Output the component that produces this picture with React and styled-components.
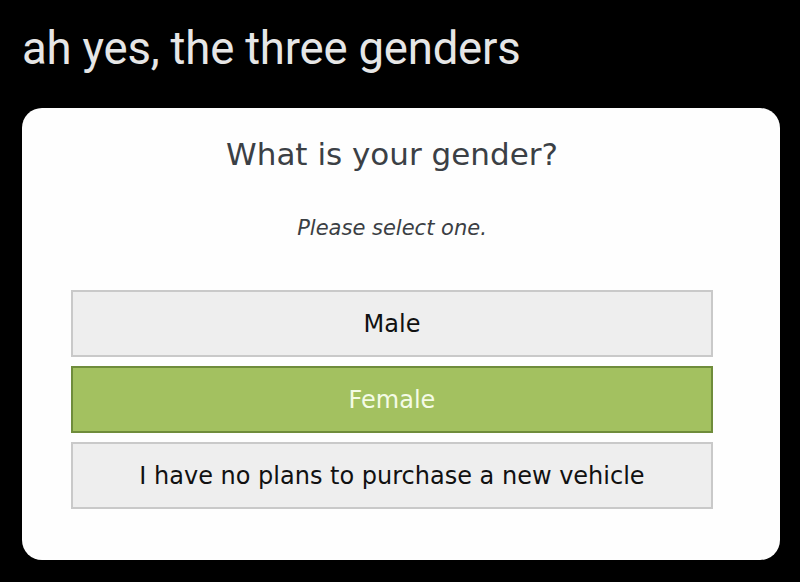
import React from "react";
import styled, { createGlobalStyle } from "styled-components";

const Global = createGlobalStyle`
  html, body { margin: 0; padding: 0; background: #000; }
  body { width: 800px; height: 582px; overflow: hidden; }
`;

const Page = styled.div`
  width: 800px;
  height: 582px;
  background: #000;
  display: flex;
  flex-direction: column;
  padding: 0 20px 22px 22px;
  box-sizing: border-box;
`;

const Caption = styled.h1`
  margin: 0;
  padding-top: 21px;
  height: 108px;
  flex: none;
  box-sizing: border-box;
  font-family: Roboto, "Noto Sans", sans-serif;
  font-weight: 400;
  font-size: 45.5px;
  line-height: 56px;
  color: #e6e6e6;
  letter-spacing: -0.2px;
`;

const Card = styled.div`
  flex: 1;
  background: #fefefe;
  border-radius: 20px;
  display: flex;
  flex-direction: column;
  align-items: center;
  padding: 24px 67px 0 49px;
  font-family: "DejaVu Sans", Verdana, sans-serif;
`;

const Question = styled.h2`
  margin: 0;
  font-weight: 400;
  font-size: 31px;
  line-height: 44px;
  color: #3b4045;
`;

const Hint = styled.p`
  margin: 38px 0 0;
  font-style: italic;
  font-size: 21px;
  line-height: 28px;
  color: #3b3f44;
`;

const Options = styled.div`
  align-self: stretch;
  display: flex;
  flex-direction: column;
  gap: 9px;
  margin-top: 48px;
`;

const Option = styled.div`
  height: 67px;
  box-sizing: border-box;
  display: flex;
  align-items: center;
  justify-content: center;
  font-size: 24px;
  border: 2px solid ${(p) => (p.$selected ? "#6f8c3b" : "#c9c9c9")};
  background: ${(p) => (p.$selected ? "#a3c160" : "#eeeeee")};
  color: ${(p) => (p.$selected ? "#f4fbe6" : "#111")};
`;

const options = [
  { label: "Male" },
  { label: "Female", selected: true },
  { label: "I have no plans to purchase a new vehicle" },
];

export default function App() {
  return (
    <>
      <Global />
      <Page>
        <Caption>ah yes, the three genders</Caption>
        <Card>
          <Question>What is your gender?</Question>
          <Hint>Please select one.</Hint>
          <Options>
            {options.map((o) => (
              <Option key={o.label} $selected={o.selected}>
                {o.label}
              </Option>
            ))}
          </Options>
        </Card>
      </Page>
    </>
  );
}
